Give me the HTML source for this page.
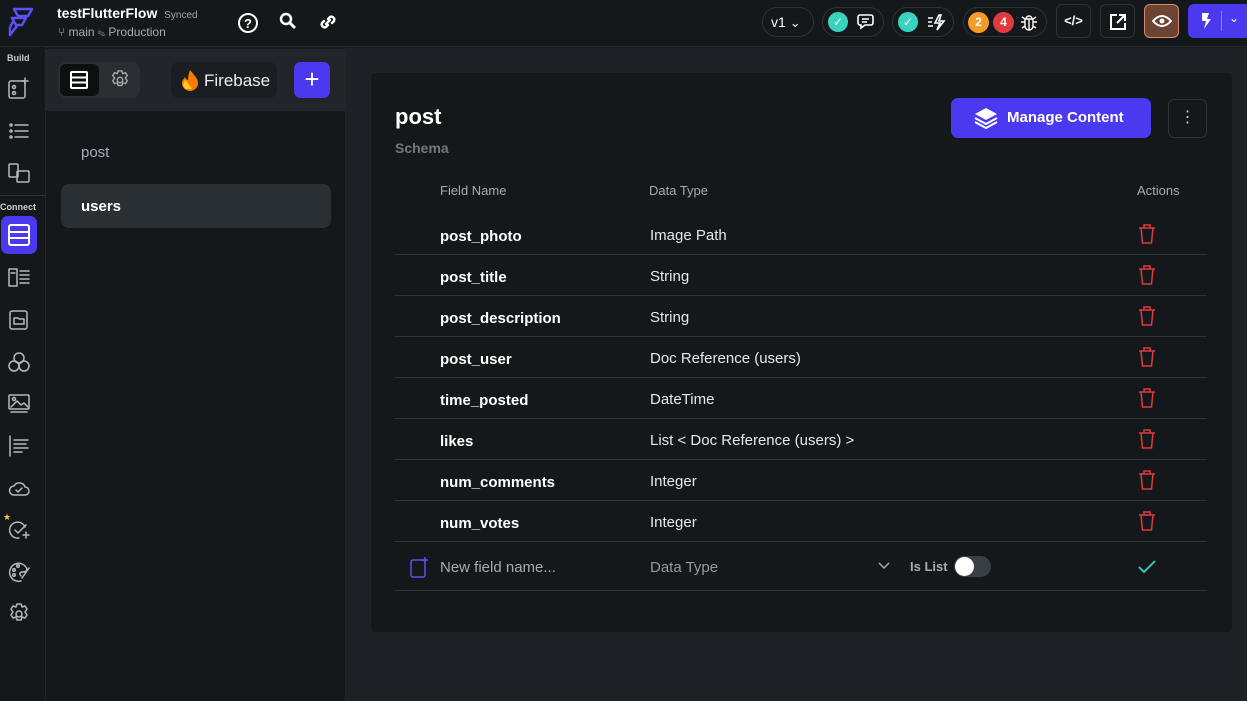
<!DOCTYPE html><html><head><meta charset="utf-8"><style>
*{box-sizing:border-box;margin:0;padding:0}
body{width:1247px;height:701px;overflow:hidden;background:#1d2125;font-family:"Liberation Sans",sans-serif;color:#fff;position:relative}
.abs{position:absolute}
.top{left:0;top:0;width:1247px;height:47px;background:#14181b;border-bottom:1px solid #22262b}
.rail{left:0;top:47px;width:46px;height:654px;background:#14181b;border-right:1px solid #22262b}
.panel{left:46px;top:48px;width:300px;height:653px;background:#14181b;border-right:1px solid #22262b}
.ph{left:0;top:1px;width:300px;height:62px;background:#22262b}
.card{left:371px;top:73px;width:861px;height:559px;background:#14181b;border-radius:4px}
.pill{top:7px;height:30px;border:1px solid #2e3338;border-radius:15px;background:#14181b}
.sq{top:4px;width:35px;height:34px;border:1px solid #2e3338;border-radius:6px}
.row{left:24px;width:812px;height:41px;border-bottom:1px solid #2f3439}
.fn{position:absolute;left:45px;top:14px;font-size:15px;font-weight:bold}
.dt{position:absolute;left:255px;top:13px;font-size:15px;color:#e8e8e8}
.tr{position:absolute;left:743px;top:10px}
.ri{position:absolute;left:8px}
.ri *{fill:none;stroke:#b5b8bc;stroke-width:1.5;stroke-linecap:round;stroke-linejoin:round}
</style></head><body>
<div class="abs top">
 <svg class="abs" style="left:6px;top:6px" width="30" height="32" viewBox="0 0 30 32"><path d="M8 3h18l-4 7H12zM6 12h14l-4 7H10zM4 21l4 -7M4 21v8l7-9" fill="none" stroke="#5b4ff5" stroke-width="2.5" stroke-linejoin="round"/></svg>
 <div class="abs" style="left:57px;top:5px;font-size:14px;font-weight:bold">testFlutterFlow <span style="font-size:10px;color:#9aa;font-weight:normal;margin-left:3px">Synced</span></div>
 <div class="abs" style="left:58px;top:25px;font-size:12px;color:#aab">⑂ main ✎ Production</div>
 <svg class="abs" style="left:237px;top:12px" width="22" height="22" viewBox="0 0 22 22"><circle cx="11" cy="11" r="9" fill="none" stroke="#fff" stroke-width="2"/><text x="11" y="16" font-size="13" font-weight="bold" text-anchor="middle" fill="#fff" font-family="Liberation Sans">?</text></svg>
 <svg class="abs" style="left:279px;top:12px" width="18" height="18" viewBox="0 0 18 18"><circle cx="7" cy="7" r="5" fill="none" stroke="#fff" stroke-width="2.5"/><path d="M11 11l5 5" stroke="#fff" stroke-width="3"/></svg>
 <svg class="abs" style="left:317px;top:11px" width="22" height="22" viewBox="0 0 22 22"><path d="M9 13l4-4M7 10l-2 2a3 3 0 004 4l2-2M15 12l2-2a3 3 0 00-4-4l-2 2" fill="none" stroke="#fff" stroke-width="2.4" stroke-linecap="round"/></svg>
 <div class="abs pill" style="left:762px;width:52px;font-size:14px;padding:6px 0 0 8px">v1 <span style="font-size:13px">⌄</span></div>
 <div class="abs pill" style="left:822px;width:62px"><div class="abs" style="left:5px;top:4px;width:20px;height:20px;border-radius:50%;background:#39d2c0;font-size:12px;text-align:center;line-height:20px">✓</div><svg class="abs" style="left:34px;top:5px" width="20" height="19" viewBox="0 0 20 19"><path d="M3 2h11a2 2 0 012 2v6a2 2 0 01-2 2H8l-4 3v-3H3a2 2 0 01-2-2V4a2 2 0 012-2zM5 6h7M5 9h5" fill="none" stroke="#fff" stroke-width="1.6"/></svg></div>
 <div class="abs pill" style="left:892px;width:62px"><div class="abs" style="left:5px;top:4px;width:20px;height:20px;border-radius:50%;background:#39d2c0;font-size:12px;text-align:center;line-height:20px">✓</div><svg class="abs" style="left:34px;top:5px" width="20" height="19" viewBox="0 0 20 19"><path d="M1 5h5M1 9h4M1 13h5M12 2l-4 8h5l-3 7 7-9h-5l2-6z" fill="none" stroke="#fff" stroke-width="1.6"/></svg></div>
 <div class="abs pill" style="left:963px;width:84px"><div class="abs" style="left:4px;top:4px;width:21px;height:21px;border-radius:50%;background:#f59b28;font-size:12px;font-weight:bold;text-align:center;line-height:21px">2</div><div class="abs" style="left:29px;top:4px;width:21px;height:21px;border-radius:50%;background:#e0393e;font-size:12px;font-weight:bold;text-align:center;line-height:21px">4</div><svg class="abs" style="left:56px;top:4px" width="18" height="20" viewBox="0 0 18 20"><path d="M5 7h8v7a4 4 0 01-8 0zM6 7a3 3 0 016 0M9 7v11M1 10h4M13 10h4M2 16l3-2M16 16l-3-2M2 5l3 2M16 5l-3 2" fill="none" stroke="#fff" stroke-width="1.4"/></svg></div>
 <div class="abs sq" style="left:1056px;font-size:13px;text-align:center;line-height:32px;font-weight:bold">&lt;/&gt;</div>
 <div class="abs sq" style="left:1100px"><svg class="abs" style="left:8px;top:8px" width="18" height="18" viewBox="0 0 18 18"><path d="M8 2H2v14h14v-6M10 2h6v6M16 2l-8 8" fill="none" stroke="#fff" stroke-width="2"/></svg></div>
 <div class="abs sq" style="left:1144px;background:#6b4434;border-color:#d58a6a"><svg class="abs" style="left:7px;top:9px" width="20" height="14" viewBox="0 0 20 14"><path d="M1 7q9-10 18 0q-9 10-18 0z" fill="none" stroke="#fff" stroke-width="2"/><circle cx="10" cy="7" r="2.5" fill="#fff"/></svg></div>
 <div class="abs" style="left:1188px;top:4px;width:59px;height:34px;background:#4b39ef;border-radius:6px 0 0 6px"><svg class="abs" style="left:12px;top:8px" width="12" height="18" viewBox="0 0 12 18"><path d="M2 1h7l-2 6h4L4 17l2-8H2z" fill="#fff"/></svg><div class="abs" style="left:33px;top:7px;width:1px;height:20px;background:#8c82f5"></div><div class="abs" style="left:41px;top:7px;font-size:12px">⌄</div></div>
</div>
<div class="abs rail">
 <div class="abs" style="left:7px;top:6px;font-size:9px;font-weight:bold;color:#ccc">Build</div>
 <svg class="ri" style="top:30px" width="22" height="22" viewBox="0 0 22 22"><rect x="1" y="4" width="16" height="17" rx="2"/><path d="M17 1v6M14 4h6"/><circle cx="6" cy="10" r="1.5"/><circle cx="6" cy="16" r="1.5"/></svg>
 <svg class="ri" style="top:73px" width="22" height="22" viewBox="0 0 22 22"><circle cx="3" cy="5" r="1"/><circle cx="3" cy="11" r="1"/><circle cx="3" cy="17" r="1"/><path d="M7 5h13M7 11h13M7 17h13"/></svg>
 <svg class="ri" style="top:115px" width="22" height="22" viewBox="0 0 22 22"><rect x="1" y="2" width="9" height="13" rx="1"/><rect x="9" y="9" width="12" height="11" rx="1"/></svg>
 <div class="abs" style="left:0;top:148px;width:46px;height:1px;background:#2e3338"></div>
 <div class="abs" style="left:0;top:155px;font-size:9px;font-weight:bold;color:#ccc">Connect</div>
 <div class="abs" style="left:1px;top:169px;width:36px;height:38px;background:#4b39ef;border-radius:7px"><svg class="abs" style="left:7px;top:8px" width="22" height="22" viewBox="0 0 22 22"><rect x="1" y="1" width="20" height="20" rx="2" fill="none" stroke="#fff" stroke-width="2"/><path d="M1 8h20M1 14h20" stroke="#fff" stroke-width="2"/></svg></div>
 <svg class="ri" style="top:220px" width="22" height="22" viewBox="0 0 22 22"><rect x="1" y="2" width="8" height="17"/><path d="M12 4h9M12 8h9M12 12h9M12 16h9M3 6h4"/></svg>
 <svg class="ri" style="top:262px" width="22" height="22" viewBox="0 0 22 22"><rect x="2" y="2" width="17" height="18" rx="2"/><path d="M6 9h4l1 1h5v5H6z"/></svg>
 <svg class="ri" style="top:304px" width="22" height="22" viewBox="0 0 22 22"><circle cx="11" cy="7" r="5"/><circle cx="6" cy="15" r="5"/><circle cx="16" cy="15" r="5"/></svg>
 <svg class="ri" style="top:346px" width="22" height="22" viewBox="0 0 22 22"><rect x="1" y="2" width="20" height="14" rx="1"/><path d="M3 14l6-6 4 4 3-2 4 4M3 19h16"/><circle cx="6" cy="6" r="1.5"/></svg>
 <svg class="ri" style="top:388px" width="22" height="22" viewBox="0 0 22 22"><path d="M2 1v20M6 5h14M6 9h12M6 13h14M6 17h8"/></svg>
 <svg class="ri" style="top:430px" width="22" height="22" viewBox="0 0 22 22"><path d="M6 18h11a4 4 0 000-8 6 6 0 00-11-1 4.5 4.5 0 000 9zM8 13l2 2 4-4"/></svg>
 <div class="abs" style="left:3px;top:465px;color:#f5c542;font-size:9px">★</div>
 <svg class="ri" style="top:472px" width="22" height="22" viewBox="0 0 22 22"><path d="M17 8A8 8 0 1011 19M7 11l3 3 8-8M15 16h6M18 13v6"/></svg>
 <svg class="ri" style="top:514px" width="22" height="22" viewBox="0 0 22 22"><path d="M13 20A9 9 0 1119 8c0 3-3 3-5 3s-3 2-1 4M21 7l-7 10"/><circle cx="6" cy="9" r="1.3"/><circle cx="10" cy="5" r="1.3"/><circle cx="6" cy="14" r="1.3"/></svg>
 <svg class="ri" style="top:556px" width="22" height="22" viewBox="0 0 22 22"><circle cx="11" cy="11" r="3"/><path d="M9 1h4l1 3 3-1 2 3-2 3 2 3-2 3-3-1-1 3H9l-1-3-3 1-2-3 2-3-2-3 2-3 3 1z"/></svg>
</div>
<div class="abs panel">
 <div class="abs ph">
  <div class="abs" style="left:12px;top:13px;width:82px;height:36px;background:#2a2f34;border-radius:8px"><div class="abs" style="left:2px;top:2px;width:39px;height:32px;background:#0d0f11;border-radius:6px"><svg class="abs" style="left:10px;top:7px" width="18" height="18" viewBox="0 0 18 18"><rect x="1" y="1" width="16" height="16" rx="1" fill="none" stroke="#fff" stroke-width="2"/><path d="M1 6.5h16M1 11.5h16" stroke="#fff" stroke-width="2"/></svg></div><svg class="abs" style="left:52px;top:8px" width="20" height="20" viewBox="0 0 22 22"><g fill="none" stroke="#aaa" stroke-width="1.5"><circle cx="11" cy="11" r="3"/><path d="M9 1h4l1 3 3-1 2 3-2 3 2 3-2 3-3-1-1 3H9l-1-3-3 1-2-3 2-3-2-3 2-3 3 1z"/></g></svg></div>
  <div class="abs" style="left:125px;top:13px;width:106px;height:36px;background:#1a1d21;border-radius:8px"><svg class="abs" style="left:9px;top:7px" width="20" height="22" viewBox="0 0 20 22"><path d="M10 1c5 6 8 9 8 13a8 8 0 01-16 0c0-3 2-4 3-6 1 2 2 3 3 3 0-4 1-7 2-10z" fill="#f57c00"/><path d="M6 20a5 5 0 010-9c1 3 4 5 6 9z" fill="#ffca28"/></svg><div class="abs" style="left:33px;top:9px;font-size:17px;color:#eee">Firebase</div></div>
  <div class="abs" style="left:248px;top:13px;width:36px;height:36px;background:#4b39ef;border-radius:7px;text-align:center;font-size:26px;line-height:34px">+</div>
 </div>
 <div class="abs" style="left:35px;top:96px;font-size:15px;color:#aab">post</div>
 <div class="abs" style="left:15px;top:136px;width:270px;height:44px;background:#2a2f34;border-radius:8px"><div class="abs" style="left:20px;top:14px;font-size:15px;font-weight:bold">users</div></div>
</div>
<div class="abs card">
 <div class="abs" style="left:24px;top:31px;font-size:22px;font-weight:bold">post</div>
 <div class="abs" style="left:24px;top:67px;font-size:14px;font-weight:bold;color:#777">Schema</div>
 <div class="abs" style="left:580px;top:25px;width:200px;height:40px;background:#4b39ef;border-radius:7px"><svg class="abs" style="left:23px;top:9px" width="24" height="22" viewBox="0 0 24 22"><path d="M12 1l11 6-11 6-11-6z" fill="#fff"/><path d="M1 11l11 6 11-6M1 15l11 6 11-6" fill="none" stroke="#fff" stroke-width="2"/></svg><div class="abs" style="left:56px;top:11px;font-size:15px;font-weight:bold">Manage Content</div></div>
 <div class="abs" style="left:797px;top:26px;width:39px;height:39px;border:1px solid #2e3338;border-radius:6px;text-align:center;line-height:36px;font-size:16px;color:#ccc">⋮</div>
 <div class="abs" style="left:69px;top:110px;font-size:13px;color:#aaa">Field Name</div>
 <div class="abs" style="left:278px;top:110px;font-size:13px;color:#aaa">Data Type</div>
 <div class="abs" style="left:766px;top:110px;font-size:13px;color:#aaa">Actions</div>
 <div class="abs row" style="top:141px"><span class="fn">post_photo</span><span class="dt">Image Path</span><svg class="tr" width="18" height="20" viewBox="0 0 18 20"><path d="M1 4h16M6 4V1h6v3M3 4l1.5 15h9L15 4" fill="none" stroke="#e0393e" stroke-width="1.5"/></svg></div>
 <div class="abs row" style="top:182px"><span class="fn">post_title</span><span class="dt">String</span><svg class="tr" width="18" height="20" viewBox="0 0 18 20"><path d="M1 4h16M6 4V1h6v3M3 4l1.5 15h9L15 4" fill="none" stroke="#e0393e" stroke-width="1.5"/></svg></div>
 <div class="abs row" style="top:223px"><span class="fn">post_description</span><span class="dt">String</span><svg class="tr" width="18" height="20" viewBox="0 0 18 20"><path d="M1 4h16M6 4V1h6v3M3 4l1.5 15h9L15 4" fill="none" stroke="#e0393e" stroke-width="1.5"/></svg></div>
 <div class="abs row" style="top:264px"><span class="fn">post_user</span><span class="dt">Doc Reference (users)</span><svg class="tr" width="18" height="20" viewBox="0 0 18 20"><path d="M1 4h16M6 4V1h6v3M3 4l1.5 15h9L15 4" fill="none" stroke="#e0393e" stroke-width="1.5"/></svg></div>
 <div class="abs row" style="top:305px"><span class="fn">time_posted</span><span class="dt">DateTime</span><svg class="tr" width="18" height="20" viewBox="0 0 18 20"><path d="M1 4h16M6 4V1h6v3M3 4l1.5 15h9L15 4" fill="none" stroke="#e0393e" stroke-width="1.5"/></svg></div>
 <div class="abs row" style="top:346px"><span class="fn">likes</span><span class="dt">List &lt; Doc Reference (users) &gt;</span><svg class="tr" width="18" height="20" viewBox="0 0 18 20"><path d="M1 4h16M6 4V1h6v3M3 4l1.5 15h9L15 4" fill="none" stroke="#e0393e" stroke-width="1.5"/></svg></div>
 <div class="abs row" style="top:387px"><span class="fn">num_comments</span><span class="dt">Integer</span><svg class="tr" width="18" height="20" viewBox="0 0 18 20"><path d="M1 4h16M6 4V1h6v3M3 4l1.5 15h9L15 4" fill="none" stroke="#e0393e" stroke-width="1.5"/></svg></div>
 <div class="abs row" style="top:428px"><span class="fn">num_votes</span><span class="dt">Integer</span><svg class="tr" width="18" height="20" viewBox="0 0 18 20"><path d="M1 4h16M6 4V1h6v3M3 4l1.5 15h9L15 4" fill="none" stroke="#e0393e" stroke-width="1.5"/></svg></div>
 <div class="abs row" style="top:469px;height:49px">
  <svg class="abs" style="left:15px;top:14px" width="20" height="22" viewBox="0 0 20 22"><rect x="1" y="4" width="14" height="17" rx="2" fill="none" stroke="#5b4ff5" stroke-width="1.5"/><path d="M15 1v6M12 4h6" stroke="#5b4ff5" stroke-width="1.5"/></svg>
  <span class="fn" style="top:17px;font-weight:normal;color:#aaa">New field name...</span>
  <span class="dt" style="top:17px;color:#999">Data Type</span>
  <svg class="abs" style="left:483px;top:20px" width="12" height="8" viewBox="0 0 12 8"><path d="M1 1l5 5 5-5" fill="none" stroke="#aaa" stroke-width="1.5"/></svg>
  <span class="abs" style="left:515px;top:17px;font-size:13px;font-weight:bold;color:#aaa">Is List</span>
  <div class="abs" style="left:559px;top:14px;width:37px;height:21px;border-radius:11px;background:#3a3f44"><div class="abs" style="left:1px;top:1px;width:19px;height:19px;border-radius:50%;background:#fff"></div></div>
  <svg class="abs" style="left:743px;top:18px" width="18" height="14" viewBox="0 0 18 14"><path d="M1 7l5 5L17 1" fill="none" stroke="#39d2c0" stroke-width="1.8"/></svg>
 </div>
</div>
</body></html>
